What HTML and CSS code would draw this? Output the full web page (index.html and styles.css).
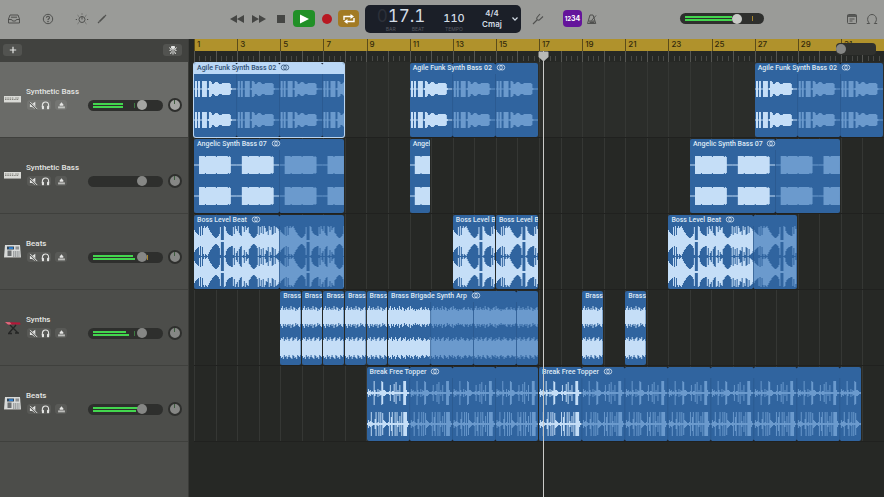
FILE: index.html
```html
<!DOCTYPE html>
<html lang="en">
<head>
  <meta charset="UTF-8">
  <title>Arrangement</title>
  <meta name="viewport" content="width=device-width, initial-scale=1.0">
  <link rel="stylesheet" href="styles.css">
</head>
<body>

  <!-- Shared icons -->
  <svg class="defs" width="0" height="0">
    <symbol id="i-mute" viewBox="0 0 10 10">
      <path d="M1 3.400h2.500L7 .8v8.400L3.500 6.600H1z" fill="currentColor"/>
      <path d="M.8 1.200l8 8" stroke="#5b5c59" stroke-width="2"/>
      <path d="M1.200 1l8 8" stroke="currentColor" stroke-width="1"/>
    </symbol>
    <symbol id="i-solo" viewBox="0 0 10 10">
      <path d="M1.500 7V5a3.500 3.800 0 0 1 7 0v2" fill="none" stroke="currentColor" stroke-width="1.200"/>
      <rect x="1" y="5.400" width="2.300" height="3.800" rx=".8" fill="currentColor"/>
      <rect x="6.700" y="5.400" width="2.300" height="3.800" rx=".8" fill="currentColor"/>
    </symbol>
    <symbol id="i-input" viewBox="0 0 10 10">
      <path d="M5 1.500l2 2.500v1.400H3V4z" fill="currentColor"/>
      <path d="M1.200 6h7.600v2.200H1.200z" fill="currentColor" opacity=".7"/>
    </symbol>
    <symbol id="i-loop" viewBox="0 0 10 8">
      <circle cx="3.600" cy="4" r="2.900" fill="none" stroke="currentColor" stroke-width=".9"/>
      <circle cx="6.400" cy="4" r="2.900" fill="none" stroke="currentColor" stroke-width=".9"/>
    </symbol>
    <symbol id="i-bass" viewBox="0 0 17 16">
      <rect x="0" y="5" width="17" height="7" fill="#d9dad6"/>
      <rect x="0" y="11" width="17" height="1" fill="#9a9a96"/>
      <path d="M1 7h9M1 8.500h14" stroke="#85857f" stroke-width="1" stroke-dasharray="1.500 .8"/>
      <rect x="11" y="6" width="4" height="2" fill="#b9bab5"/>
    </symbol>
    <symbol id="i-beats" viewBox="0 0 17 16">
      <path d="M1 2h15l1 12.500H0z" fill="#d8dad9"/>
      <rect x="3" y="3.500" width="7" height="3" fill="#30475c"/>
      <rect x="5" y="4.200" width="4" height="1.800" fill="#2f7fd0"/>
      <rect x="11.500" y="3.500" width="3.500" height="3" fill="#8d9092"/>
      <rect x="3.500" y="7.500" width="4" height="5.500" fill="#6b6e70"/>
      <path d="M9 9h6.500M9 11h6.500M9 13h6.500" stroke="#8b8e90" stroke-width="1.300" stroke-dasharray="1.200 .6"/>
      <path d="M0 14.500h17" stroke="#8b8b88" stroke-width="1"/>
    </symbol>
    <symbol id="i-synth" viewBox="0 0 17 16">
      <path d="M1 3l15 .6.600 2L4 5.400z" fill="#b51738"/>
      <path d="M1 3l5 .2 1.500 2.200L4 5.400z" fill="#dd6f80"/>
      <path d="M6 6l8 8M12 6l-7 8M4 14.500h4M11 14h4" fill="none" stroke="#252625" stroke-width="1.300"/>
    </symbol>
  </svg>

  <div class="app">

    <!-- ---------- Toolbar ---------- -->
    <header class="toolbar">
      <div class="tool-group tool-left">
        <button class="tool" aria-label="Library">
          <svg width="14" height="12" viewBox="0 0 14 12" fill="none" stroke="currentColor"><path d="M1.500 6L3 2h8l1.500 4v4h-11z"/><path d="M1.500 6.500h3.200l.8 1.500h3l.8-1.500h3.200M4 4.200h6"/></svg>
        </button>
        <button class="tool" aria-label="Quick Help">
          <svg width="12" height="12" viewBox="0 0 12 12" fill="none" stroke="currentColor"><circle cx="6" cy="6" r="4.700"/><path d="M4.500 4.800c0-2 3-2 3 0 0 1-1.500 1-1.500 2.200" stroke-width="1.100"/><circle cx="6" cy="8.500" r=".4"/></svg>
        </button>
        <button class="tool" aria-label="Smart Controls">
          <svg width="14" height="12" viewBox="0 0 14 12" fill="none" stroke="currentColor"><circle cx="7" cy="6.500" r="3"/><path d="M7 6.500V3M7 .5v1M2.700 2.300l.9.900M11.300 2.300l-.9.900M.8 6.500H2M12 6.500h1.200M2.700 10.700l.9-.900M11.300 10.700l-.9-.900"/></svg>
        </button>
        <button class="tool" aria-label="Editors">
          <svg width="12" height="12" viewBox="0 0 12 12" fill="none" stroke="currentColor"><path d="M3.500 8.500L9 3" stroke-width="1.700"/><path d="M2 10l1.500-1.500M9.200 2.800l.8-.8" stroke-width="1.200"/></svg>
        </button>
      </div>

      <div class="tool-group transport">
        <button class="key" aria-label="Rewind">
          <svg width="14" height="10" viewBox="0 0 14 10" fill="currentColor"><path d="M7 1v8L0 5zM14 1v8L7 5z"/></svg>
        </button>
        <button class="key" aria-label="Forward">
          <svg width="14" height="10" viewBox="0 0 14 10" fill="currentColor"><path d="M0 1v8l7-4zM7 1v8l7-4z"/></svg>
        </button>
        <button class="key" aria-label="Stop">
          <svg width="14" height="10" viewBox="0 0 14 10" fill="currentColor"><rect x="3" y="1" width="8" height="8"/></svg>
        </button>
        <button class="key key-play" aria-label="Play">
          <svg width="12" height="12" viewBox="0 0 12 12" fill="#fff"><path d="M2 1.500v9L11 6z"/></svg>
        </button>
        <button class="key key-record" aria-label="Record">
          <svg width="12" height="12" viewBox="0 0 12 12"><circle cx="6" cy="6" r="5" fill="#b81822"/></svg>
        </button>
        <button class="key key-cycle" aria-label="Cycle">
          <svg width="14" height="12" viewBox="0 0 14 12" fill="none" stroke="#fff" stroke-width="1.400"><path d="M2 7V3.500h7.500M12 5v3.500H4.500"/><path d="M8.500 1L12 3.500 8.500 6zM5.500 6L2 8.500 5.500 11z" fill="#fff" stroke="none"/></svg>
        </button>
      </div>

      <div class="lcd">
        <div class="lcd-cell">
          <span class="lcd-digits"><span class="lcd-off">0</span>17.1</span>
          <span class="lcd-captions"><span>BAR</span><span>BEAT</span></span>
        </div>
        <div class="lcd-cell">
          <span class="lcd-number">110</span>
          <span class="lcd-caption">TEMPO</span>
        </div>
        <div class="lcd-cell lcd-key">
          <span>4/4</span>
          <span>Cmaj</span>
        </div>
        <button class="lcd-menu" aria-label="Display mode">
          <svg width="8" height="6" viewBox="0 0 8 6" fill="none" stroke="currentColor" stroke-width="1.200"><path d="M1.500 1.500L4 4.200l2.500-2.700"/></svg>
        </button>
      </div>

      <div class="tool-group tool-mode">
        <button class="tool" aria-label="Tuner">
          <svg width="12" height="12" viewBox="0 0 12 12" fill="none" stroke="currentColor" stroke-width="1.100"><path d="M1 11l4-4M8 1L5 4.500c-1 1.500.8 3.500 2.500 2.300L11 3.500"/></svg>
        </button>
        <button class="count-in" aria-label="Count in"><small>12</small>34</button>
        <button class="tool" aria-label="Metronome">
          <svg width="12" height="12" viewBox="0 0 12 12" fill="none" stroke="currentColor"><path d="M1.500 10.500L4 2h3l2.800 8.500zM2.500 8h6.500M5.500 7.500L10 2.500"/><path d="M3.500 9.300h5" stroke-width="1.600"/></svg>
        </button>
      </div>

      <div class="fader fader-master">
        <span class="meter"><i style="width:64%"></i><i style="width:64%"></i></span>
        <span class="peak"></span>
        <input type="range" aria-label="Master volume" value="70">
      </div>

      <div class="tool-group tool-right">
        <button class="tool" aria-label="Note Pad">
          <svg width="12" height="12" viewBox="0 0 12 12" fill="none" stroke="currentColor"><rect x="1.500" y="1.500" width="9" height="9" rx="1"/><path d="M1.500 3h9" stroke-width="1.800"/><path d="M3.500 6h5M3.500 8h3"/></svg>
        </button>
        <button class="tool" aria-label="Loop Browser">
          <svg width="12" height="12" viewBox="0 0 12 12" fill="none" stroke="currentColor"><path d="M.8 10.500h2.900c-3.800-3-2-9 2.300-9s6.100 6 2.300 9h2.900"/></svg>
        </button>
      </div>
    </header>

    <div class="workspace">

      <!-- ---------- Track headers ---------- -->
      <aside class="tracks">
        <div class="tracks-head">
          <button class="chip" aria-label="Add track">
            <svg width="8" height="8" viewBox="0 0 8 8" stroke="currentColor" stroke-width="1.200"><path d="M4 .8v6.400M.8 4h6.400"/></svg>
          </button>
          <button class="chip" aria-label="Catch playhead">
            <svg width="10" height="10" viewBox="0 0 10 10" fill="none" stroke="currentColor"><path d="M3.500 1.500h3v1.500L5 4.500 3.500 3z" fill="currentColor"/><path d="M5 4.500v5M1.500 2.500l2 2.500-2 .5M2.500 9l1-2.500M8.500 2.500l-2 2.500 2 .5M7.500 9l-1-2.500"/></svg>
          </button>
        </div>

        <section class="track track-selected">
          <svg class="track-icon"><use href="#i-bass"/></svg>
          <div class="track-body">
            <h2>Synthetic Bass</h2>
            <div class="track-controls">
              <span class="pair"><button aria-label="Mute"><svg><use href="#i-mute"/></svg></button><button aria-label="Solo"><svg><use href="#i-solo"/></svg></button></span>
              <button class="monitor" aria-label="Input monitoring"><svg><use href="#i-input"/></svg></button>
              <div class="fader">
                <span class="meter"><i style="width:46%"></i><i style="width:46%"></i></span>
                <span class="peak peak-low"></span>
                <input type="range" aria-label="Volume" value="75">
              </div>
              <button class="pan" aria-label="Pan"></button>
            </div>
          </div>
        </section>

        <section class="track">
          <svg class="track-icon"><use href="#i-bass"/></svg>
          <div class="track-body">
            <h2>Synthetic Bass</h2>
            <div class="track-controls">
              <span class="pair"><button aria-label="Mute"><svg><use href="#i-mute"/></svg></button><button aria-label="Solo"><svg><use href="#i-solo"/></svg></button></span>
              <button class="monitor" aria-label="Input monitoring"><svg><use href="#i-input"/></svg></button>
              <div class="fader">
                <input type="range" aria-label="Volume" value="75">
              </div>
              <button class="pan" aria-label="Pan"></button>
            </div>
          </div>
        </section>

        <section class="track">
          <svg class="track-icon"><use href="#i-beats"/></svg>
          <div class="track-body">
            <h2>Beats</h2>
            <div class="track-controls">
              <span class="pair"><button aria-label="Mute"><svg><use href="#i-mute"/></svg></button><button aria-label="Solo"><svg><use href="#i-solo"/></svg></button></span>
              <button class="monitor" aria-label="Input monitoring"><svg><use href="#i-input"/></svg></button>
              <div class="fader">
                <span class="meter"><i style="width:62%"></i><i style="width:64%"></i></span>
                <span class="peak"></span>
                <input type="range" aria-label="Volume" value="75">
              </div>
              <button class="pan" aria-label="Pan"></button>
            </div>
          </div>
        </section>

        <section class="track">
          <svg class="track-icon"><use href="#i-synth"/></svg>
          <div class="track-body">
            <h2>Synths</h2>
            <div class="track-controls">
              <span class="pair"><button aria-label="Mute"><svg><use href="#i-mute"/></svg></button><button aria-label="Solo"><svg><use href="#i-solo"/></svg></button></span>
              <button class="monitor" aria-label="Input monitoring"><svg><use href="#i-input"/></svg></button>
              <div class="fader">
                <span class="meter"><i style="width:51%"></i><i style="width:55%"></i></span>
                <span class="peak peak-low"></span>
                <input type="range" aria-label="Volume" value="75">
              </div>
              <button class="pan" aria-label="Pan"></button>
            </div>
          </div>
        </section>

        <section class="track">
          <svg class="track-icon"><use href="#i-beats"/></svg>
          <div class="track-body">
            <h2>Beats</h2>
            <div class="track-controls">
              <span class="pair"><button aria-label="Mute"><svg><use href="#i-mute"/></svg></button><button aria-label="Solo"><svg><use href="#i-solo"/></svg></button></span>
              <button class="monitor" aria-label="Input monitoring"><svg><use href="#i-input"/></svg></button>
              <div class="fader">
                <span class="meter"><i style="width:70%"></i><i style="width:66%"></i></span>
                <input type="range" aria-label="Volume" value="75">
              </div>
              <button class="pan" aria-label="Pan"></button>
            </div>
          </div>
        </section>
      </aside>

      <!-- ---------- Timeline: 32 bars ---------- -->
      <main class="timeline">
        <div class="ruler">
          <div class="ruler-bars">
            <span>1</span><span>3</span><span>5</span><span>7</span><span>9</span><span>11</span><span>13</span><span>15</span>
            <span>17</span><span>19</span><span>21</span><span>23</span><span>25</span><span>27</span><span>29</span><span>31</span>
          </div>
          <div class="ruler-ticks"></div>
          <input class="zoom" type="range" aria-label="Zoom" value="0">
        </div>

        <div class="lane lane-selected">
          <article class="clip clip-selected from-1 len-7"><h3>Agile Funk Synth Bass 02 <svg><use href="#i-loop"/></svg></h3><svg class="wave" data-wave="agile" data-bars="7"></svg></article>
          <article class="clip from-11 len-6"><h3>Agile Funk Synth Bass 02 <svg><use href="#i-loop"/></svg></h3><svg class="wave" data-wave="agile" data-bars="6"></svg></article>
          <article class="clip from-27 len-6"><h3>Agile Funk Synth Bass 02 <svg><use href="#i-loop"/></svg></h3><svg class="wave" data-wave="agile" data-bars="6"></svg></article>
        </div>

        <div class="lane">
          <article class="clip from-1 len-7"><h3>Angelic Synth Bass 07 <svg><use href="#i-loop"/></svg></h3><svg class="wave" data-wave="angelic" data-bars="7"></svg></article>
          <article class="clip from-11 len-1"><h3>Angel</h3><svg class="wave" data-wave="angelic" data-bars="1"></svg></article>
          <article class="clip from-24 len-7"><h3>Angelic Synth Bass 07 <svg><use href="#i-loop"/></svg></h3><svg class="wave" data-wave="angelic" data-bars="7"></svg></article>
        </div>

        <div class="lane">
          <article class="clip from-1 len-7"><h3>Boss Level Beat <svg><use href="#i-loop"/></svg></h3><svg class="wave" data-wave="boss" data-bars="7"></svg></article>
          <article class="clip from-13 len-2"><h3>Boss Level B</h3><svg class="wave" data-wave="boss" data-bars="2"></svg></article>
          <article class="clip from-15 len-2"><h3>Boss Level B</h3><svg class="wave" data-wave="boss" data-bars="2"></svg></article>
          <article class="clip from-23 len-6"><h3>Boss Level Beat <svg><use href="#i-loop"/></svg></h3><svg class="wave" data-wave="boss" data-bars="6"></svg></article>
        </div>

        <div class="lane">
          <article class="clip from-5 len-1"><h3>Brass</h3><svg class="wave" data-wave="brass" data-bars="1"></svg></article>
          <article class="clip from-6 len-1"><h3>Brass</h3><svg class="wave" data-wave="brass" data-bars="1"></svg></article>
          <article class="clip from-7 len-1"><h3>Brass</h3><svg class="wave" data-wave="brass" data-bars="1"></svg></article>
          <article class="clip from-8 len-1"><h3>Brass</h3><svg class="wave" data-wave="brass" data-bars="1"></svg></article>
          <article class="clip from-9 len-1"><h3>Brass</h3><svg class="wave" data-wave="brass" data-bars="1"></svg></article>
          <article class="clip from-10 len-7"><h3>Brass Brigade Synth Arp <svg><use href="#i-loop"/></svg></h3><svg class="wave" data-wave="brass" data-bars="7"></svg></article>
          <article class="clip from-19 len-1"><h3>Brass</h3><svg class="wave" data-wave="brass" data-bars="1"></svg></article>
          <article class="clip from-21 len-1"><h3>Brass</h3><svg class="wave" data-wave="brass" data-bars="1"></svg></article>
        </div>

        <div class="lane">
          <article class="clip from-9 len-8"><h3>Break Free Topper <svg><use href="#i-loop"/></svg></h3><svg class="wave" data-wave="break" data-bars="8"></svg></article>
          <article class="clip from-17 len-15"><h3>Break Free Topper <svg><use href="#i-loop"/></svg></h3><svg class="wave" data-wave="break" data-bars="15"></svg></article>
        </div>

        <div class="playhead"><svg width="11" height="11" viewBox="0 0 11 11"><path d="M.5 1.500a1 1 0 0 1 1-1h8a1 1 0 0 1 1 1V6l-5 4.500L.5 6z" fill="#b9bab7"/></svg></div>
      </main>
    </div>
  </div>

  <script src="waves.js"></script>
</body>
</html>
```

FILE: styles.css
```css
* {
  box-sizing: border-box;
}
body {
  margin: 0;
  min-height: 100vh;
  font-family: Inter, "Liberation Sans", sans-serif;
  font-size: 8px;
  color: #e4e5e3;
  background: #262825;
  overflow: hidden;
}
button {
  display: flex;
  align-items: center;
  justify-content: center;
  margin: 0;
  padding: 0;
  border: 0;
  background: none;
  color: inherit;
  font: inherit;
}
h2, h3 {
  margin: 0;
  font-family: Roboto, "Liberation Sans", sans-serif;
  white-space: nowrap;
}
.defs {
  position: absolute;
}
.app {
  display: flex;
  flex-direction: column;
  min-height: 100vh;
}

/* ---------- Toolbar ---------- */
.toolbar {
  display: flex;
  align-items: center;
  height: 39px;
  padding: 0 5px 2px 7px;
  background: #9a9b98;
  color: #50514f;
}
.tool-group {
  display: flex;
  align-items: center;
}
.tool {
  width: 14px;
  height: 18px;
}
.tool-left {
  flex: 0 0 220px;
  gap: 20px;
}
.tool-left .tool:last-child {
  margin-left: -14px;
}
.transport {
  gap: 2px;
}
.key {
  width: 20px;
  height: 17px;
  border-radius: 4px;
  color: #454644;
}
.key-play {
  width: 22px;
  background: #219027;
}
.key-record {
  width: 19px;
}
.key-cycle {
  width: 21px;
  background: #a27a24;
}

/* Position and tempo display */
.lcd {
  display: grid;
  grid-template-columns: 68px 38px 38px 8px;
  align-items: center;
  height: 28px;
  margin-left: 6px;
  padding: 0 2px;
  border-radius: 5px;
  background: #1b1f28;
  color: #d3dce5;
  font-variant-numeric: tabular-nums;
}
.lcd-cell {
  display: flex;
  flex-direction: column;
  align-items: center;
}
.lcd-digits {
  font-size: 17px;
  line-height: 20px;
  font-weight: 400;
}
.lcd-off {
  color: #2c3039;
}
.lcd-captions,
.lcd-caption {
  font-size: 5px;
  line-height: 6px;
  color: #535861;
}
.lcd-captions {
  display: flex;
  gap: 16px;
  padding-left: 8px;
}
.lcd-number {
  padding-top: 5px;
  font-size: 11px;
  line-height: 15px;
  font-weight: 500;
}
.lcd-key {
  font-size: 8px;
  line-height: 11px;
  font-weight: 600;
}
.lcd-menu {
  height: 20px;
}
.tool-mode {
  margin-left: 10px;
  gap: 13px;
}
.tool-mode .tool:last-child {
  margin-left: -10px;
}
.tool-mode .count-in {
  margin-left: 5px;
}
.count-in {
  width: 19px;
  height: 17px;
  border-radius: 4px;
  background: #64149b;
  color: #fff;
  font-size: 7px;
  font-weight: 700;
}
.count-in small {
  font-size: 6px;
}
.tool-right {
  margin-left: auto;
  gap: 6px;
}

/* ---------- Faders ---------- */
.fader {
  display: flex;
  position: relative;
  flex: 1;
  height: 11px;
  border-radius: 6px;
  background: #2e2f2d;
}
.fader-master {
  flex: 0 0 84px;
  margin-left: 81px;
}
.meter {
  display: flex;
  position: absolute;
  flex-direction: column;
  justify-content: center;
  gap: 1px;
  inset: 0 5px;
}
.meter i {
  height: 2px;
  background: #43d64e;
}
.peak {
  position: absolute;
  top: 3px;
  right: 15px;
  height: 5px;
  border-left: 1px dashed #a8862c;
}
.peak-low {
  right: 28px;
  border-color: #3b7a40;
}
.fader-master .peak {
  right: 11px;
}
.fader input,
.zoom {
  position: relative;
  width: 100%;
  height: 11px;
  margin: 0;
  background: none;
  appearance: none;
}
.fader input::-webkit-slider-thumb,
.zoom::-webkit-slider-thumb {
  width: 10px;
  height: 10px;
  border-radius: 50%;
  background: #868785;
  appearance: none;
}
.track-selected .fader input::-webkit-slider-thumb {
  background: #a4a5a2;
}
.fader-master input::-webkit-slider-thumb {
  background: #c8c9c6;
}

/* ---------- Track headers ---------- */
.workspace {
  display: grid;
  flex: 1;
  grid-template-columns: 189px 1fr;
}
.tracks {
  background: #4c4d4a;
  border-right: 1px solid #3a3b38;
}
.tracks-head {
  display: flex;
  align-items: center;
  justify-content: space-between;
  height: 23px;
  padding: 0 6px 1px 3px;
  background: #41423f;
}
.chip {
  width: 19px;
  height: 12px;
  border-radius: 3px;
  background: #525350;
}
.track {
  display: flex;
  align-items: center;
  gap: 5px;
  height: 76px;
  padding: 0 6px 1px 4px;
  border-bottom: 1px solid #3f403d;
}
.track-selected {
  background: #6a6b68;
}
.track-icon {
  flex: none;
  width: 17px;
  height: 16px;
}
.track-body {
  flex: 1;
}
.track h2 {
  font-size: 8px;
  line-height: 12px;
  font-weight: 500;
}
.track-controls {
  display: flex;
  align-items: center;
  height: 14px;
}
.pair {
  display: flex;
  margin-left: 1px;
}
.pair button,
.monitor {
  width: 12px;
  height: 10px;
  background: rgba(255, 255, 255, 0.07);
}
.pair button:first-child {
  border-radius: 3px 0 0 3px;
}
.pair button:last-child {
  border-radius: 0 3px 3px 0;
}
.track-controls .monitor {
  margin: 0 21px 0 4px;
  border-radius: 3px;
}
.track-controls svg {
  width: 9px;
  height: 9px;
}
.pan {
  position: relative;
  width: 14px;
  height: 14px;
  margin-left: 5px;
  border: 2px solid #2e2f2d;
  border-radius: 50%;
  background: #868785;
}
.pan::after {
  content: "";
  position: absolute;
  top: 0;
  left: 4px;
  width: 1px;
  height: 4px;
  background: #3c5c3d;
}
.track-selected .pan {
  background: #a4a5a2;
}

/* ---------- Timeline ---------- */
.timeline {
  position: relative;
  min-width: 0;
  padding-left: 5px;
}
.ruler {
  position: relative;
  height: 23px;
}
.ruler-bars {
  display: grid;
  grid-template-columns: repeat(16, 1fr);
  height: 12px;
  background: #b0922c;
}
.ruler-bars span {
  padding-left: 2px;
  border-left: 1px solid #5b4c1a;
  font-size: 8px;
  line-height: 11px;
  font-weight: 500;
  color: #33290b;
}
.ruler-ticks {
  height: 11px;
  background:
    repeating-linear-gradient(90deg, #555652 0 1px, transparent 1px calc(100% / 32)),
    repeating-linear-gradient(90deg, #484946 0 1px, transparent 1px calc(100% / 128)) 0 5px / 100% 5px no-repeat,
    #262825;
}
.zoom {
  position: absolute;
  top: 4px;
  right: 8px;
  width: 40px;
  height: 12px;
  border-radius: 4px;
  background: #30312e;
}
.lane {
  display: grid;
  grid-template-columns: repeat(32, 1fr);
  height: 76px;
  padding: 1px 0;
  border-bottom: 1px solid #20211f;
  background: repeating-linear-gradient(90deg, #353734 0 1px, transparent 1px calc(100% / 32));
}
.lane-selected {
  background-color: #2b2d2a;
}

/* Clips sit on the bar grid: start bar + length in bars */
.clip {
  position: relative;
  grid-row: 1;
  height: 74px;
  margin-right: 1px;
  border-radius: 2px;
  background: #30649f;
  overflow: hidden;
}
.clip h3 {
  height: 11px;
  padding-left: 3px;
  font-size: 7px;
  line-height: 10px;
  font-weight: 500;
  color: #dfe9f4;
}
.clip h3 svg {
  width: 10px;
  height: 7px;
  margin-left: 2px;
  vertical-align: -1px;
}
.clip-selected {
  box-shadow: 0 0 0 1px #b9d5f2;
}
.clip-selected h3 {
  background: #bbd8f6;
  color: #2f4f72;
}
.wave {
  position: absolute;
  inset: 0;
  width: 100%;
  height: 100%;
}
.wave-source { fill: #c5def7; }
.wave-loop { fill: #6b9acd; }
.wave-notch { fill: #1d2733; }
.wave-seam { fill: #2a588d; }

.from-1 { grid-column-start: 1; }
.from-5 { grid-column-start: 5; }
.from-6 { grid-column-start: 6; }
.from-7 { grid-column-start: 7; }
.from-8 { grid-column-start: 8; }
.from-9 { grid-column-start: 9; }
.from-10 { grid-column-start: 10; }
.from-11 { grid-column-start: 11; }
.from-13 { grid-column-start: 13; }
.from-15 { grid-column-start: 15; }
.from-17 { grid-column-start: 17; }
.from-19 { grid-column-start: 19; }
.from-21 { grid-column-start: 21; }
.from-23 { grid-column-start: 23; }
.from-24 { grid-column-start: 24; }
.from-27 { grid-column-start: 27; }
.len-1 { grid-column-end: span 1; }
.len-2 { grid-column-end: span 2; }
.len-6 { grid-column-end: span 6; }
.len-7 { grid-column-end: span 7; }
.len-8 { grid-column-end: span 8; }
.len-15 { grid-column-end: span 15; }

/* Playhead at bar 17.1 */
.playhead {
  position: absolute;
  top: 12px;
  bottom: 0;
  left: calc(5px + (100% - 5px) * 16.2 / 32);
  width: 1px;
  background: #c9cac8;
}
.playhead svg {
  position: absolute;
  left: -5px;
}
```

FILE: waves.js
```javascript
// Peak heights, one hex digit per sample (0-15), for the upper and lower channel.
// "bars" is the loop length; samples are spread evenly over it.
const WAVES = {
  agile: {
    bars: 2,
    top: '0880880088888018875567776555666666665100000'
  },
  angelic: {
    bars: 2,
    top: '0000099999989999999999899999999999898000000',
    source: 4
  },
  boss: {
    bars: 4,
    top: 'b9876e5f6dfdefdb9865433457e111fea876655e7fcaf865fe9fbde875433457f6e8f7fd9a6fbe67f8edca'
  },
  brass: {
    bars: 2,
    top: '79b797a8797b87a96879a7b8978687879a787a87976',
    low: '8a9b798b979ab78a9b7897a89b8798b9a878a97898b'
  },
  break: {
    bars: 2,
    top: '1423121c3114132cb3321112812291b1318111ccc3111',
    low: '1423c2115c12c1c1b432112c17c11c1c3181c1cccc311'
  }
};

const BAR = 43;      // units per bar, two per pixel
const CENTERS = [26, 57];

function channel(peaks, x0, width, center, limit) {
  const step = width / peaks.length;
  let d = '';
  for (let i = 0; i < peaks.length; i++) {
    const x = x0 + i * step;
    if (x >= limit) break;
    const w = Math.min(step, limit - x);
    const h = Math.max(parseInt(peaks[i], 16), 0.4);
    d += `M${x} ${center - h}h${w}v${h * 2}h${-w}z`;
  }
  return d;
}

function drawWave(svg) {
  const wave = WAVES[svg.dataset.wave];
  const bars = Number(svg.dataset.bars);
  const total = bars * BAR;
  const length = wave.bars * BAR;
  const source = (wave.source || wave.bars) * BAR;
  let html = '';

  for (let x = 0; x < total; x += length) {
    const d = channel(wave.top, x, length, CENTERS[0], total) +
      channel(wave.low || wave.top, x, length, CENTERS[1], total);
    html += `<path class="${x < source ? 'wave-source' : 'wave-loop'}" d="${d}"/>`;
  }

  // loop boundaries
  for (let x = source; x < total; x += source) {
    html += `<rect class="wave-seam" x="${x - 1}" y="11" width="1.5" height="63"/>`;
    html += `<path class="wave-notch" d="M${x - 3} 0h5l-2.5 1.5zM${x - 3} 74h5l-2.5-1.5z"/>`;
  }

  svg.setAttribute('viewBox', `0 0 ${total} 74`);
  svg.setAttribute('preserveAspectRatio', 'none');
  svg.innerHTML = html;
}

document.querySelectorAll('.wave').forEach(drawWave);
```
